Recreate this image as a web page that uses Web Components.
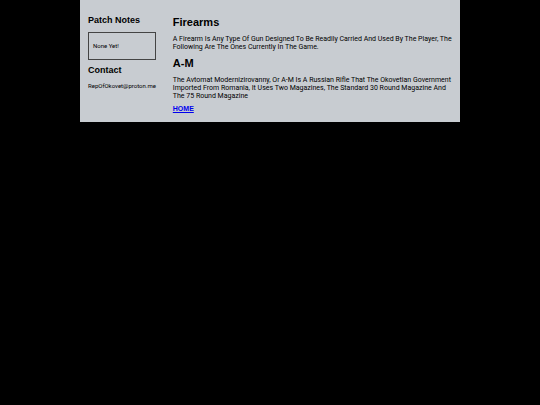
<!DOCTYPE html>
<html lang="en">
<head>
<meta charset="utf-8">
<meta name="viewport" content="width=device-width, initial-scale=1">
<title>Firearms</title>
<style>
    body {
        margin: 0;
        background-color: black;
        font-family: Roboto, "Liberation Sans", Arial, sans-serif;
        --heading-font: "Liberation Sans", Arial, sans-serif;
    }
</style>
</head>
<body>
    <wiki-page>
        <side-bar slot="side">
            <side-section heading="Patch Notes">
                <note-box>None Yet!</note-box>
            </side-section>
            <side-section heading="Contact">RepOfOkovet@proton.me</side-section>
        </side-bar>
        <wiki-entry heading="Firearms">A Firearm Is Any Type Of Gun Designed To Be Readily Carried And Used By The Player, The Following Are The Ones Currently In The Game.</wiki-entry>
        <wiki-entry heading="A-M">The Avtomat Modernizirovanny, Or A-M Is A Russian Rifle That The Okovetian Government Imported From Romania, It Uses Two Magazines, The Standard 30 Round Magazine And The 75 Round Magazine</wiki-entry>
        <page-link href="#home">HOME</page-link>
    </wiki-page>

<script>
function render(element, html) {
    const shadow = element.attachShadow({ mode: "open" });
    const temp = document.createElement("template");
    temp.innerHTML = html;
    shadow.appendChild(temp.content.cloneNode(true));
}

class WikiPage extends HTMLElement {
    constructor() {
        super();
        render(this, `
            <style>
                :host {
                    display: grid;
                    grid-template-columns: minmax(0, 17fr) minmax(0, 70fr);
                    gap: 17px;
                    box-sizing: border-box;
                    max-width: 380px;
                    margin: 0 auto;
                    padding: 15px 8px 9px;
                    background-color: #c8ccd1;
                }
            </style>
            <slot name="side"></slot>
            <main><slot></slot></main>
        `);
    }
}

class SideBar extends HTMLElement {
    constructor() {
        super();
        render(this, `
            <style>
                :host {
                    display: block;
                }
            </style>
            <aside><slot></slot></aside>
        `);
    }
}

class SideSection extends HTMLElement {
    constructor() {
        super();
        render(this, `
            <style>
                :host {
                    display: block;
                    margin-bottom: 5px;
                    font-size: 6px;
                    line-height: 8px;
                }
                h2 {
                    margin: 0 0 7px;
                    font-family: var(--heading-font);
                    font-size: 9px;
                    line-height: 10px;
                }
            </style>
            <h2></h2>
            <slot></slot>
        `);
    }

    connectedCallback() {
        this.shadowRoot.querySelector("h2").innerText = this.getAttribute("heading");
    }
}

class NoteBox extends HTMLElement {
    constructor() {
        super();
        render(this, `
            <style>
                :host {
                    display: block;
                    padding: 9px 4px;
                    border: 1px solid #444;
                }
            </style>
            <slot></slot>
        `);
    }
}

class WikiEntry extends HTMLElement {
    constructor() {
        super();
        render(this, `
            <style>
                :host {
                    display: block;
                    margin-bottom: 5px;
                }
                h1 {
                    margin: 0 0 6px;
                    font-family: var(--heading-font);
                    font-size: 11px;
                    line-height: 14px;
                }
                p {
                    margin: 0;
                    font-size: 7px;
                    line-height: 8px;
                }
            </style>
            <h1></h1>
            <p><slot></slot></p>
        `);
    }

    connectedCallback() {
        this.shadowRoot.querySelector("h1").innerText = this.getAttribute("heading");
    }
}

class PageLink extends HTMLElement {
    constructor() {
        super();
        render(this, `
            <style>
                :host {
                    display: block;
                    font-family: var(--heading-font);
                    font-size: 7px;
                    font-weight: bold;
                    line-height: 8px;
                }
                a {
                    color: #0000ee;
                }
            </style>
            <a><slot></slot></a>
        `);
    }

    connectedCallback() {
        this.shadowRoot.querySelector("a").href = this.getAttribute("href");
    }
}

customElements.define("wiki-page", WikiPage);
customElements.define("side-bar", SideBar);
customElements.define("side-section", SideSection);
customElements.define("note-box", NoteBox);
customElements.define("wiki-entry", WikiEntry);
customElements.define("page-link", PageLink);
</script>
</body>
</html>
